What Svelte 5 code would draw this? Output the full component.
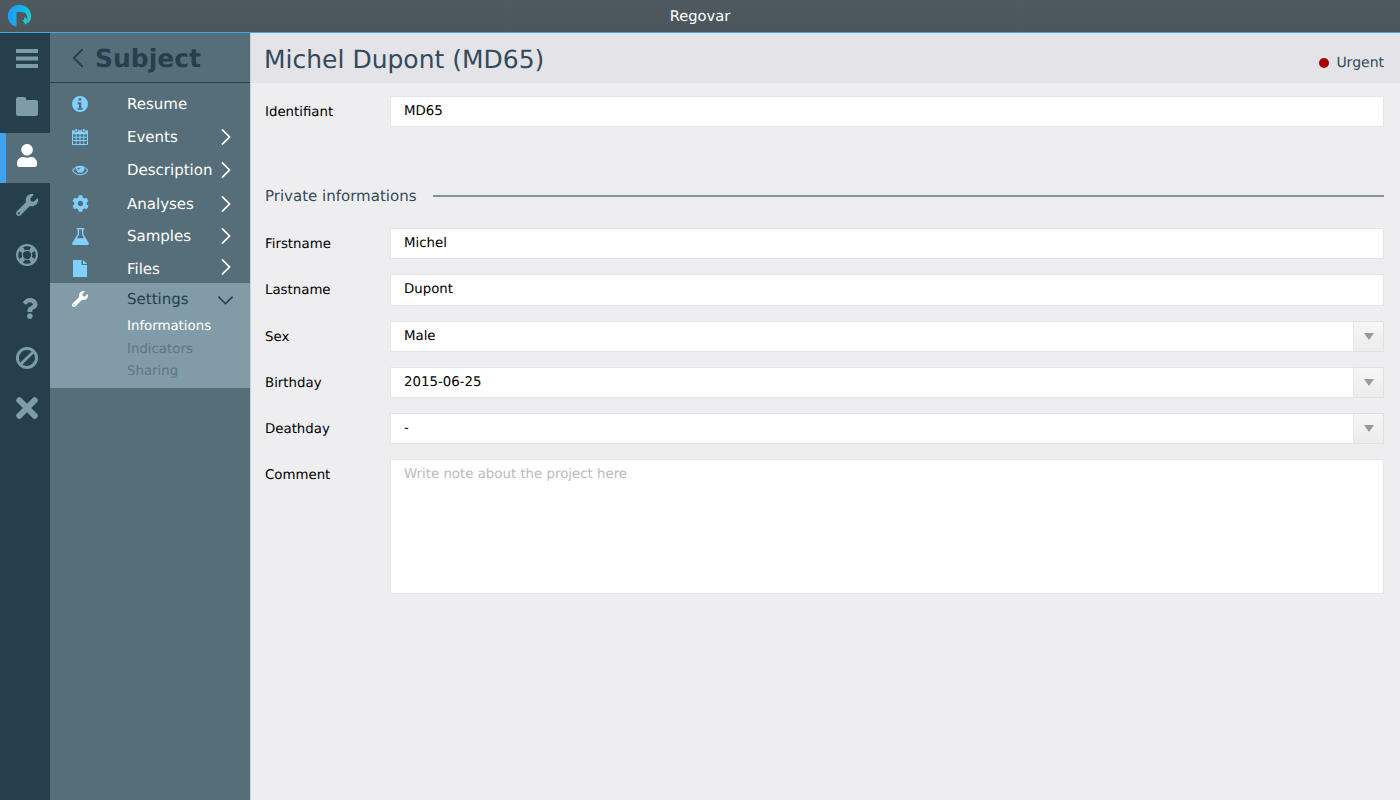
<script>
	const icons = {
		bars: { vb: '0 0 22 19', d: 'M0 0h22v4H0zM0 7.500h22v4H0zM0 15h22v4H0z' },
		folder: { vb: '0 0 22 19', d: 'M2 0h6c1.300 0 2.200.9 2.200 2.200V3H20c1.100 0 2 .9 2 2v12c0 1.100-.9 2-2 2H2c-1.100 0-2-.9-2-2V2C0 .9.9 0 2 0z' },
		user: { vb: '0 0 448 512', d: 'M224 256c70.700 0 128-57.300 128-128S294.700 0 224 0 96 57.300 96 128s57.300 128 128 128zm89.600 32h-16.700c-22.200 10.200-46.900 16-72.900 16s-50.600-5.800-72.900-16h-16.700C60.200 288 0 348.200 0 422.400V464c0 26.500 21.500 48 48 48h352c26.500 0 48-21.500 48-48v-41.600c0-74.200-60.200-134.400-134.400-134.400z' },
		wrench: { vb: '0 0 512 512', d: 'M507.730 109.100c-2.240-9.030-13.540-12.090-20.120-5.510l-74.360 74.360-67.880-11.310-11.310-67.880 74.360-74.360c6.620-6.620 3.430-17.900-5.660-20.160-47.380-11.740-99.550.91-136.580 37.930-39.640 39.640-50.550 97.100-34.050 147.200L18.740 402.760c-24.990 24.990-24.990 65.510 0 90.500 24.990 24.990 65.510 24.990 90.500 0l213.210-213.210c50.120 16.710 107.470 5.680 147.370-34.220 37.070-37.070 49.700-89.320 37.910-136.730zM64 472c-13.250 0-24-10.750-24-24 0-13.260 10.750-24 24-24s24 10.740 24 24c0 13.250-10.750 24-24 24z' },
		lifering: { vb: '0 0 24 24', d: 'M12 0a12 12 0 1 0 0 24a12 12 0 1 0 0-24zM12 2.500c1.600 0 3.100.4 4.400 1.100l-2.100 3.100a6 6 0 0 0-4.600 0L7.600 3.600C8.900 2.900 10.400 2.500 12 2.500zM3.600 7.600l3.100 2.100a6 6 0 0 0 0 4.600l-3.100 2.100a9.500 9.500 0 0 1 0-8.800zM20.400 7.600a9.500 9.500 0 0 1 0 8.800l-3.100-2.100a6 6 0 0 0 0-4.600zM12 7.500a4.500 4.500 0 1 1 0 9a4.500 4.500 0 1 1 0-9zM9.700 17.300a6 6 0 0 0 4.600 0l2.100 3.100a9.500 9.500 0 0 1-8.800 0z' },
		question: { vb: '0 0 384 512', d: 'M202.021 0C122.202 0 70.503 32.703 29.914 91.026c-7.363 10.580-5.093 25.086 5.178 32.874l43.138 32.709c10.373 7.865 25.132 6.026 33.253-4.148 25.049-31.381 43.630-49.449 82.757-49.449 30.764 0 68.816 19.799 68.816 49.631 0 22.552-18.617 34.134-48.993 51.164-35.423 19.860-82.299 44.576-82.299 106.405V320c0 13.255 10.745 24 24 24h72.471c13.255 0 24-10.745 24-24v-5.773c0-42.860 125.268-44.645 125.268-160.627C377.504 66.256 286.902 0 202.021 0zM192 373.459c-38.196 0-69.271 31.075-69.271 69.271 0 38.195 31.075 69.270 69.271 69.270s69.271-31.075 69.271-69.271-31.075-69.270-69.271-69.270z' },
		ban: { vb: '0 0 24 24', d: 'M12 0a12 12 0 1 0 0 24a12 12 0 1 0 0-24zM12 3.200c1.900 0 3.600.6 5 1.600L4.800 17a8.800 8.800 0 0 1 7.200-13.800zM19.200 7A8.800 8.800 0 0 1 7 19.200z' },
		times: { vb: '0 0 352 512', d: 'M242.720 256l100.070-100.070c12.280-12.280 12.280-32.190 0-44.480l-22.240-22.240c-12.280-12.280-32.190-12.280-44.480 0L176 189.280 75.930 89.210c-12.280-12.280-32.190-12.280-44.480 0L9.210 111.450c-12.280 12.280-12.280 32.190 0 44.480L109.280 256 9.210 356.070c-12.280 12.280-12.280 32.190 0 44.480l22.240 22.240c12.280 12.280 32.200 12.280 44.480 0L176 322.720l100.070 100.070c12.280 12.280 32.200 12.280 44.480 0l22.240-22.240c12.280-12.280 12.280-32.190 0-44.480L242.720 256z' },
		info: { vb: '0 0 24 24', d: 'M12 0a12 12 0 1 0 0 24a12 12 0 1 0 0-24zM10 3.500h4v3.500h-4zM8.500 9.500H14v8h2v3H8.500v-3h2v-5h-2z' },
		calendar: { vb: '0 0 24 24', d: 'M5 0h3v3H5zM16 0h3v3h-3zM1.500 2H4v2h5V2h6v2h5V2h2.500C23.300 2 24 2.700 24 3.500V22.500c0 .8-.7 1.500-1.500 1.500h-21C.7 24 0 23.300 0 22.500V3.500C0 2.700.7 2 1.500 2zM1.500 8v3.500h4V8zM7 8v3.500h4.200V8zM12.800 8v3.500H17V8zM18.500 8v3.500h4V8zM1.500 13v3.500h4V13zM7 13v3.500h4.200V13zM12.800 13v3.500H17V13zM18.500 13v3.500h4V13zM1.500 18v4.500h4V18zM7 18v4.500h4.200V18zM12.800 18v4.500H17V18zM18.500 18v4.500h4V18z' },
		eye: { vb: '0 0 24 16', d: 'M12 1c5 0 9.300 2.900 12 7-2.700 4.100-7 7-12 7S2.700 12.100 0 8c2.700-4.100 7-7 12-7zM12 2.400C7.800 2.400 4.200 4.600 1.800 8c2.400 3.400 6 5.600 10.200 5.600S19.800 11.400 22.200 8c-1.100-1.600-2.500-3-4.100-4a6.200 6.200 0 1 1-12.200 0c1.800-1 3.900-1.600 6.100-1.600zM9.500 4a1.500 1.500 0 1 0 0 3a1.500 1.500 0 1 0 0-3z' },
		cog: { vb: '0 0 512 512', d: 'M487.400 315.700l-42.600-24.600c4.300-23.200 4.300-47 0-70.200l42.600-24.600c4.900-2.800 7.100-8.600 5.500-14-11.100-35.600-30-67.800-54.700-94.600-3.800-4.100-10-5.100-14.800-2.300L380.800 110c-17.900-15.400-38.500-27.300-60.800-35.100V25.800c0-5.600-3.900-10.500-9.400-11.700-36.700-8.200-74.300-7.800-109.200 0-5.500 1.200-9.400 6.100-9.400 11.700V75c-22.200 7.900-42.800 19.800-60.800 35.100L88.700 85.500c-4.900-2.800-11-1.900-14.800 2.300-24.700 26.700-43.600 58.900-54.700 94.600-1.700 5.400.6 11.200 5.500 14L67.300 221c-4.300 23.200-4.300 47 0 70.200l-42.600 24.600c-4.900 2.800-7.100 8.600-5.500 14 11.100 35.600 30 67.800 54.700 94.600 3.800 4.100 10 5.100 14.800 2.300l42.600-24.600c17.900 15.400 38.500 27.300 60.800 35.100v49.200c0 5.600 3.900 10.500 9.400 11.700 36.700 8.200 74.300 7.800 109.200 0 5.500-1.200 9.400-6.100 9.400-11.700v-49.200c22.200-7.900 42.800-19.800 60.800-35.100l42.600 24.600c4.900 2.800 11 1.900 14.800-2.300 24.700-26.700 43.600-58.900 54.700-94.600 1.500-5.500-.7-11.300-5.600-14.100zM256 336c-44.100 0-80-35.900-80-80s35.900-80 80-80 80 35.900 80 80-35.900 80-80 80z' },
		flask: { vb: '0 0 24 24', d: 'M6.500 0h11v2H16v6.500L23.500 21c1 1.600 0 3-1.700 3H2.200C.5 24-.5 22.600.5 21L8 8.500V2H6.500zM10 2v7.100L6.800 14.500h10.400L14 9.100V2z' },
		file: { vb: '0 0 20 24', d: 'M1 0h11v7h8v16c0 .6-.4 1-1 1H1c-.6 0-1-.4-1-1V1c0-.6.4-1 1-1zM14 0l6 5.500h-6z' }
	};

	const rail = [
		{ icon: 'bars', h: 19, up: 0 },
		{ icon: 'folder', h: 19, up: 4 },
		{ icon: 'user', h: 23, up: 6 },
		{ icon: 'wrench', h: 22, up: 6 },
		{ icon: 'lifering', h: 22, up: 6 },
		{ icon: 'question', h: 21, up: 0, right: 10 },
		{ icon: 'ban', h: 22, up: 0 },
		{ icon: 'times', h: 32, up: 0 }
	];

	const menu = [
		{ icon: 'info', label: 'Resume', h: 33, size: 16 },
		{ icon: 'calendar', label: 'Events', more: true, h: 33.5, size: 16 },
		{ icon: 'eye', label: 'Description', more: true, h: 33, size: 11 },
		{ icon: 'cog', label: 'Analyses', more: true, h: 34, size: 17 },
		{ icon: 'flask', label: 'Samples', more: true, h: 31, size: 17 },
		{ icon: 'file', label: 'Files', more: true, h: 31.5, size: 17, pad: 3 }
	];

	const fields = [
		{ label: 'Firstname', value: 'Michel' },
		{ label: 'Lastname', value: 'Dupont' },
		{ label: 'Sex', value: 'Male', select: true },
		{ label: 'Birthday', value: '2015-06-25', select: true },
		{ label: 'Deathday', value: '-', select: true }
	];
</script>

<div class="app">
	<header class="titlebar">
		<svg class="logo" viewBox="0 0 24 24" width="24" height="24">
			<defs>
				<linearGradient id="ring" x1="0" y1="0.4" x2="1" y2="0.6">
					<stop offset="0" stop-color="#1e9bf5" />
					<stop offset="0.6" stop-color="#12b5e8" />
					<stop offset="1" stop-color="#1fd0c4" />
				</linearGradient>
			</defs>
			<path fill="url(#ring)" d="M12 1a11 11 0 0 1 8.400 18.100L19 17.500l.5-2.500c0-4.200-2-7-5.800-7H8.500v14.700A11 11 0 0 1 12 1z" />
			<path fill="#1fc4cf" d="M16.200 13v3h-2l3.600 4.700 3.400-4.700h-2v-1.500z" />
		</svg>
		<span>Regovar</span>
	</header>

	<div class="main">
		<nav class="rail">
			{#each rail as item, i}
				<div class="rail-item" class:active={i === 2} style="padding-bottom: {item.up}px; padding-left: {item.right ?? 4}px">
					<svg viewBox={icons[item.icon].vb} height={item.h}>
						<path fill="currentColor" fill-rule="evenodd" d={icons[item.icon].d} />
					</svg>
				</div>
			{/each}
		</nav>

		<aside class="panel">
			<div class="panel-head">
				<svg class="back" viewBox="0 0 14 24" width="12" height="20">
					<path d="M12.500 1.500 2 12l10.500 10.500" fill="none" stroke="currentColor" stroke-width="2.200" />
				</svg>
				<h2>Subject</h2>
			</div>
			<div class="menu">
				{#each menu as item}
					<div class="menu-row" style="height: {item.h}px; padding-top: {item.pad ?? 0}px">
						<span class="menu-icon">
							<svg viewBox={icons[item.icon].vb} height={item.size}>
								<path fill="currentColor" fill-rule="evenodd" d={icons[item.icon].d} />
							</svg>
						</span>
						<span class="menu-label">{item.label}</span>
						{#if item.more}
							<svg class="chevron" viewBox="0 0 12 20" width="11" height="18">
								<path d="M2 1.500 10.500 10 2 18.500" fill="none" stroke="currentColor" stroke-width="1.900" />
							</svg>
						{/if}
					</div>
				{/each}
			</div>
			<div class="open-group">
				<div class="menu-row open">
					<span class="menu-icon">
						<svg viewBox={icons.wrench.vb} height="16">
							<path fill="currentColor" fill-rule="evenodd" d={icons.wrench.d} />
						</svg>
					</span>
					<span class="menu-label">Settings</span>
					<svg class="chevron-down" viewBox="0 0 20 12" width="17" height="10">
						<path d="M1.500 2 10 10.500 18.500 2" fill="none" stroke="currentColor" stroke-width="1.900" />
					</svg>
				</div>
				<div class="sub current">Informations</div>
				<div class="sub">Indicators</div>
				<div class="sub">Sharing</div>
			</div>
		</aside>

		<main class="content">
			<div class="content-head">
				<h1>Michel Dupont (MD65)</h1>
				<div class="status"><span class="dot"></span>Urgent</div>
			</div>
			<div class="form">
				<div class="row">
					<span class="label">Identifiant</span>
					<div class="input">MD65</div>
				</div>
				<div class="section">
					<span>Private informations</span>
					<i></i>
				</div>
				{#each fields as field}
					<div class="row">
						<span class="label">{field.label}</span>
						<div class="input">{field.value}</div>
						{#if field.select}
							<div class="caret"><b></b></div>
						{/if}
					</div>
				{/each}
				<div class="row">
					<span class="label">Comment</span>
					<div class="input area">Write note about the project here</div>
				</div>
			</div>
		</main>
	</div>
</div>

<style>
	:global(body) {
		margin: 0;
		font-family: "DejaVu Sans", sans-serif;
		text-rendering: geometricPrecision;
	}

	.app {
		width: 1400px;
		height: 800px;
		display: flex;
		flex-direction: column;
		overflow: hidden;
	}

	.titlebar {
		height: 32px;
		flex: none;
		display: flex;
		align-items: center;
		justify-content: center;
		position: relative;
		color: #fff;
		font-size: 14.67px;
		background: linear-gradient(#4f5a60, #4a565c);
		border-bottom: 1px solid #3da9e8;
	}

	.logo {
		position: absolute;
		left: 8px;
		top: 4px;
	}

	.main {
		flex: 1;
		display: flex;
		min-height: 0;
	}

	.rail {
		width: 50px;
		flex: none;
		background: #263f4c;
	}

	.rail-item {
		height: 50px;
		box-sizing: border-box;
		display: flex;
		align-items: center;
		justify-content: center;
		color: #7f9ba7;
	}

	.rail-item.active {
		background: #566e7a;
		color: #fff;
		box-shadow: inset 6px 0 0 #3fa3f0;
	}

	.panel {
		width: 200px;
		flex: none;
		background: #566e7a;
	}

	.panel-head {
		height: 49px;
		display: flex;
		align-items: center;
		padding-left: 22px;
		gap: 11px;
		color: #263f4c;
		border-bottom: 1px solid #263f4c;
	}

	.panel-head h2 {
		margin: 2px 0 0;
		font-size: 25px;
		font-weight: bold;
	}

	.menu {
		padding-top: 4px;
	}

	.menu-row {
		display: flex;
		align-items: center;
		box-sizing: border-box;
		color: #fff;
		font-size: 15px;
		position: relative;
	}

	.menu-icon {
		width: 60px;
		display: flex;
		justify-content: center;
		color: #7fd0ff;
	}

	.menu-label {
		margin-left: 17px;
	}

	.chevron {
		position: absolute;
		left: 170px;
		top: 50%;
		margin-top: -9px;
	}

	.chevron-down {
		position: absolute;
		left: 167px;
		top: 12px;
	}

	.open-group {
		background: #819ca8;
		height: 105px;
	}

	.menu-row.open {
		height: 33px;
		padding-bottom: 2px;
		color: #263f4c;
	}

	.menu-row.open .menu-icon {
		color: #fff;
	}

	.sub {
		height: 22.5px;
		line-height: 22.5px;
		padding-left: 77px;
		font-size: 13.33px;
		color: #5e7784;
	}

	.sub.current {
		color: #fff;
	}

	.content {
		flex: 1;
		min-width: 0;
		background: #eeeef0;
		border-left: 1px solid #c9d0d6;
	}

	.content-head {
		height: 50px;
		display: flex;
		align-items: center;
		justify-content: space-between;
		padding: 0 16px 0 13px;
		background: #e3e3e8;
		color: #34495a;
	}

	.content-head h1 {
		margin: 2px 0 0;
		font-size: 25px;
		font-weight: normal;
	}

	.status {
		display: flex;
		align-items: center;
		font-size: 14px;
		gap: 7px;
		padding-top: 9px;
	}

	.dot {
		width: 10px;
		height: 10px;
		border-radius: 50%;
		background: #a80000;
	}

	.form {
		padding: 12.5px 16px 0 14px;
	}

	.row {
		display: flex;
		margin-bottom: 15px;
		font-size: 13.33px;
		color: #000;
	}

	.label {
		width: 125px;
		flex: none;
		padding-top: 9px;
	}

	.input {
		flex: 1;
		box-sizing: border-box;
		height: 31.25px;
		line-height: 29px;
		padding: 0 13px;
		background: #fff;
		border: 1px solid #e6e6e8;
	}

	.input.area {
		height: 135px;
		color: #bbb;
	}

	.caret {
		width: 30px;
		height: 31.25px;
		box-sizing: border-box;
		flex: none;
		display: flex;
		align-items: center;
		justify-content: center;
		background: linear-gradient(#f6f6f6, #ececec);
		border: 1px solid #e0e0e2;
		border-left: none;
	}

	.caret b {
		border-left: 5px solid transparent;
		border-right: 5px solid transparent;
		border-top: 7px solid #999;
	}

	.section {
		display: flex;
		align-items: center;
		gap: 17px;
		margin: 59.25px 0 22px;
		font-size: 15px;
		color: #34495a;
	}

	.section span {
		line-height: 20px;
	}

	.section i {
		flex: 1;
		height: 2px;
		background: #83939c;
	}
</style>
